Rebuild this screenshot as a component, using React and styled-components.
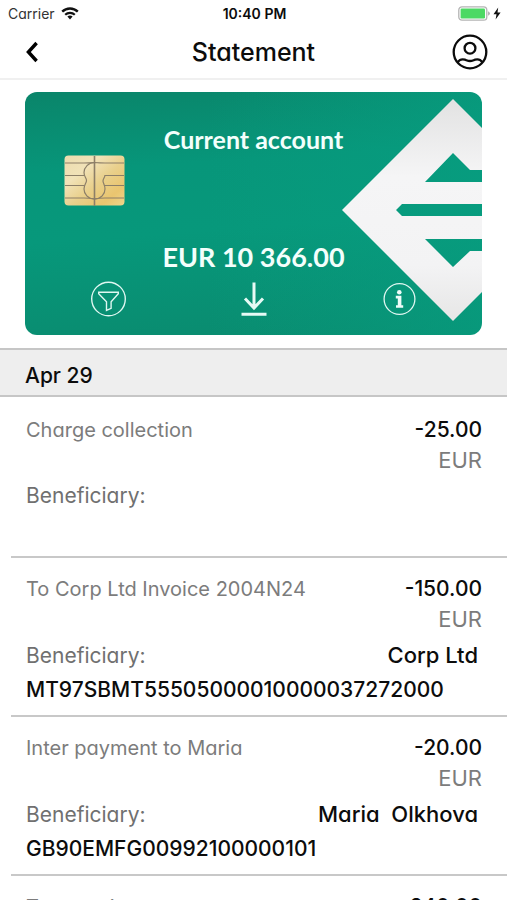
import styled, { createGlobalStyle } from "styled-components";

const GlobalStyle = createGlobalStyle`
  * {
    box-sizing: border-box;
  }

  body {
    margin: 0;
    background-color: #fff;
    color: #0c0c0c;
    font-family: Inter, "Liberation Sans", sans-serif;
    /* single-storey a */
    font-feature-settings: "cv11" 1;
  }
`;

const StyledApp = styled.div`
  display: flex;
  flex-direction: column;
  height: 100vh;
`;

const StatusBar = styled.div`
  display: grid;
  grid-template-columns: 1fr auto 1fr;
  align-items: center;
  height: 27px;
  padding: 0 6px 0 8px;
  font-size: 14px;
`;

const StatusSide = styled.div`
  display: flex;
  align-items: center;
  justify-content: ${(props) => (props.$end ? "flex-end" : "flex-start")};
  gap: ${(props) => (props.$end ? 3 : 6)}px;
  color: #333;
`;

const Time = styled.time`
  font-weight: 600;
`;

const Header = styled.header`
  display: grid;
  grid-template-columns: 36px 1fr 36px;
  align-items: center;
  height: 53px;
  padding: 0 19px 1px;
  border-bottom: 2px solid #f0f0f0;
`;

const Title = styled.h1`
  margin: 0;
  text-align: center;
  font-size: 25px;
  font-weight: 500;
  line-height: 32px;
`;

const IconButton = styled.button`
  display: flex;
  align-items: center;
  justify-content: center;
  width: 36px;
  height: 36px;
  padding: 0;
  border: none;
  background: none;
  color: inherit;
  cursor: pointer;
`;

const Content = styled.main`
  flex: 1;
  min-height: 0;
  overflow-y: auto;
  scrollbar-width: none;
`;

const Card = styled.section`
  position: relative;
  display: flex;
  flex-direction: column;
  margin: 12px 25px 13px;
  padding: 33px 0 18px;
  border-radius: 12px;
  overflow: hidden;
  background: linear-gradient(
      90deg,
      rgba(7, 158, 128, 0) 40%,
      rgba(7, 158, 128, 0.7) 100%
    ),
    linear-gradient(
      176deg,
      #0a856a 0%,
      #07967a 30%,
      #07987b 55%,
      #0a8a6e 100%
    );
  color: #f3fffc;
  font-family: Lato, "Liberation Sans", sans-serif;
`;

const CardLogo = styled.svg`
  position: absolute;
  top: 0;
  right: 0;
`;

const CardName = styled.h2`
  position: relative;
  margin: 0;
  text-align: center;
  font-size: 25px;
  font-weight: 700;
  line-height: 28px;
`;

const ChipRow = styled.div`
  display: flex;
  height: 54px;
  padding: 2px 0 0 39px;
`;

const Balance = styled.p`
  position: relative;
  margin: 34px 0 8px;
  text-align: center;
  font-size: 27px;
  font-weight: 700;
  line-height: 32px;
`;

const CardActions = styled.div`
  position: relative;
  display: flex;
  justify-content: space-between;
  padding: 0 65px;
`;

const DateHeading = styled.h3`
  margin: 0 0 2px;
  padding: 7px 25px 0;
  border-top: 2px solid #c6c6c6;
  border-bottom: 2px solid #c6c6c6;
  background-color: #eee;
  font-size: 21px;
  font-weight: 500;
  line-height: 38px;
`;

const List = styled.ul`
  margin: 0;
  padding: 0;
  list-style: none;
`;

const Row = styled.li`
  height: 159px;
  margin-left: 11px;
  padding: 16px 25px 0 15px;
  border-bottom: 2px solid #c8c8c8;
`;

const Line = styled.div`
  display: flex;
  align-items: baseline;
  justify-content: space-between;
  line-height: 30px;
`;

const Description = styled.span`
  color: #7c7c7c;
  font-size: 20px;
`;

const Amount = styled.span`
  font-size: 21px;
  font-weight: 500;
`;

const Currency = styled.div`
  text-align: right;
  color: #7c7c7c;
  font-size: 22px;
  line-height: 30px;
`;

const Beneficiary = styled.div`
  display: flex;
  align-items: baseline;
  justify-content: space-between;
  margin-top: 4px;
  padding-right: 4px;
  font-size: 21px;
  line-height: 34px;
`;

const Label = styled.span`
  color: #707070;
`;

const Name = styled.span`
  font-size: 22px;
  font-weight: 500;
  white-space: pre;
`;

const Iban = styled.div`
  font-size: 21px;
  font-weight: 500;
  line-height: 34px;
`;

const transactions = [
  { id: 1, description: "Charge collection", amount: "-25.00" },
  {
    id: 2,
    description: "To Corp Ltd Invoice 2004N24",
    amount: "-150.00",
    name: "Corp Ltd",
    iban: "MT97SBMT55505000010000037272000",
  },
  {
    id: 3,
    description: "Inter payment to Maria",
    amount: "-20.00",
    name: "Maria  Olkhova",
    iban: "GB90EMFG00992100000101",
  },
  { id: 4, description: "Transaction", amount: "-240.00" },
];

function WifiIcon() {
  return (
    <svg width="18" height="13" viewBox="0 0 18 13" fill="none" stroke="#111">
      <path d="M1.2 4.6a11.2 11.2 0 0 1 15.6 0" strokeWidth="2.4" />
      <path d="M4.2 7.7a7 7 0 0 1 9.6 0" strokeWidth="2.2" />
      <path d="M6.4 9.6a3.8 3.8 0 0 1 5.2 0L9 12.4z" fill="#111" stroke="none" />
    </svg>
  );
}

function BatteryIcon() {
  return (
    <svg width="32" height="15" viewBox="0 0 32 15">
      <rect
        x="0.8"
        y="0.8"
        width="28"
        height="13.4"
        rx="3.2"
        fill="#fff"
        stroke="#b4b4b4"
        strokeWidth="1.3"
      />
      <rect x="2.6" y="2.6" width="24.4" height="9.8" rx="1.2" fill="#4cd964" />
      <path d="M30.2 5.2q1.6.8 1.6 2.3t-1.6 2.3z" fill="#a4a4a4" />
    </svg>
  );
}

function BoltIcon() {
  return (
    <svg width="8" height="13" viewBox="0 0 8 13">
      <path d="M5.2.5.5 7.2h3L2.6 12.5 7.6 5.4H4.5z" fill="#111" />
    </svg>
  );
}

function BackIcon() {
  return (
    <svg width="24" height="22" viewBox="0 0 24 22" fill="none">
      <path d="M11.6 2 3.4 11l8.2 9" stroke="#000" strokeWidth="3.4" />
    </svg>
  );
}

function ProfileIcon() {
  return (
    <svg
      width="36"
      height="36"
      viewBox="0 0 36 36"
      fill="none"
      stroke="#0c0c0c"
      strokeWidth="2.3"
    >
      <circle cx="18" cy="18" r="16.3" />
      <circle cx="18" cy="14.2" r="5.4" />
      <path d="M5.6 28.3c1.6-2.2 4.6-3.4 7.2-2.6 2 .6 3.2 1.3 5.2 1.3s3.2-.7 5.2-1.3c2.6-.8 5.6.4 7.2 2.6" />
    </svg>
  );
}

function ChipIcon() {
  return (
    <svg width="61" height="52" viewBox="0 0 61 52" fill="none">
      <defs>
        <linearGradient id="chip" x1="0" y1="0" x2="1" y2="1">
          <stop offset="0" stopColor="#ecdcae" />
          <stop offset="0.3" stopColor="#f1e2b8" />
          <stop offset="0.55" stopColor="#e9d08c" />
          <stop offset="0.8" stopColor="#eac56f" />
          <stop offset="1" stopColor="#efd58b" />
        </linearGradient>
      </defs>
      <rect x="0.5" y="0.5" width="60" height="50" rx="4" fill="url(#chip)" />
      <g stroke="#8d7f68" strokeWidth="1.2">
        <path d="M30.5 1v50" strokeWidth="1.6" />
        <path d="M1 8h19q5 0 10.5-.5Q36 8 41 8h19M1 43h19q5 0 10.5.8 5.5-.8 10.5-.8h19" />
        <path d="M1 20.5h19.5M1 30.5h19.5M41 20.5h19M41 30.5h19" />
        <path d="M30.5 7.5c-6 0-10.5 5-10.5 10 0 4 2.5 5.5 2.5 8S20 29.500 20 34c0 5 4 10 10.500 10S41 39 41 34c0-4.500-2-5.500-2-8s2-3.500 2-6" />
      </g>
    </svg>
  );
}

function FilterIcon() {
  return (
    <svg
      width="36"
      height="36"
      viewBox="0 0 36 36"
      fill="none"
      stroke="#dff7f1"
      strokeWidth="1.4"
    >
      <circle cx="18.5" cy="18" r="16.8" />
      <path d="M8.7 11.2h19.6v1.5l-7.2 8.1v6.6l-4.6 2v-8.6l-7.8-8.1z" />
    </svg>
  );
}

function DownloadIcon() {
  return (
    <svg
      width="28"
      height="36"
      viewBox="0 0 28 36"
      fill="none"
      stroke="#e6faf5"
      strokeWidth="3"
    >
      <path d="M14 1.5V27M5 17.5l9 9.5 9-9.5M1.5 33.2h25" />
    </svg>
  );
}

function InfoIcon() {
  return (
    <svg width="36" height="36" viewBox="0 0 36 36" fill="none">
      <circle cx="18.5" cy="18" r="15.4" stroke="#dff7f1" strokeWidth="1.3" />
      <circle cx="18.3" cy="11.2" r="2.3" fill="#eefcf9" />
      <path
        d="M14.8 14.8h5.6v9.4h1.8v2.6H15v-2.6h1.8v-6.8h-2z"
        fill="#eefcf9"
      />
    </svg>
  );
}

function BankLogo() {
  return (
    <CardLogo width="140" height="243" viewBox="342 92 140 243">
      <defs>
        <linearGradient id="logo" x1="0" y1="0" x2="0" y2="1">
          <stop offset="0" stopColor="#e2e2e2" />
          <stop offset="0.35" stopColor="#f5f5f6" />
          <stop offset="0.75" stopColor="#f3f3f4" />
          <stop offset="1" stopColor="#e6e6e6" />
        </linearGradient>
      </defs>
      <path
        fill="url(#logo)"
        fillRule="evenodd"
        d="M342 210 453 99l29 29v164l-29 29zM453 153l-28 29h57v-12h-12zM402 204l-6 6 6 6h80v-12zM425 239l28 28 17-16h12v-12z"
      />
    </CardLogo>
  );
}

function AccountCard() {
  return (
    <Card>
      <BankLogo />
      <CardName>Current account</CardName>
      <ChipRow>
        <ChipIcon />
      </ChipRow>
      <Balance>EUR 10 366.00</Balance>
      <CardActions>
        <IconButton aria-label="Filter">
          <FilterIcon />
        </IconButton>
        <IconButton aria-label="Download">
          <DownloadIcon />
        </IconButton>
        <IconButton aria-label="Info">
          <InfoIcon />
        </IconButton>
      </CardActions>
    </Card>
  );
}

function Transaction({ transaction }) {
  const { description, amount, name, iban } = transaction;

  return (
    <Row>
      <Line>
        <Description>{description}</Description>
        <Amount>{amount}</Amount>
      </Line>
      <Currency>EUR</Currency>
      <Beneficiary>
        <Label>Beneficiary:</Label>
        {name && <Name>{name}</Name>}
      </Beneficiary>
      {iban && <Iban>{iban}</Iban>}
    </Row>
  );
}

function App() {
  return (
    <>
      <GlobalStyle />
      <StyledApp>
        <StatusBar>
          <StatusSide>
            Carrier <WifiIcon />
          </StatusSide>
          <Time>10:40 PM</Time>
          <StatusSide $end>
            <BatteryIcon />
            <BoltIcon />
          </StatusSide>
        </StatusBar>
        <Header>
          <IconButton aria-label="Back">
            <BackIcon />
          </IconButton>
          <Title>Statement</Title>
          <IconButton aria-label="Profile">
            <ProfileIcon />
          </IconButton>
        </Header>
        <Content>
          <AccountCard />
          <DateHeading>Apr 29</DateHeading>
          <List>
            {transactions.map((transaction) => (
              <Transaction key={transaction.id} transaction={transaction} />
            ))}
          </List>
        </Content>
      </StyledApp>
    </>
  );
}

export default App;
